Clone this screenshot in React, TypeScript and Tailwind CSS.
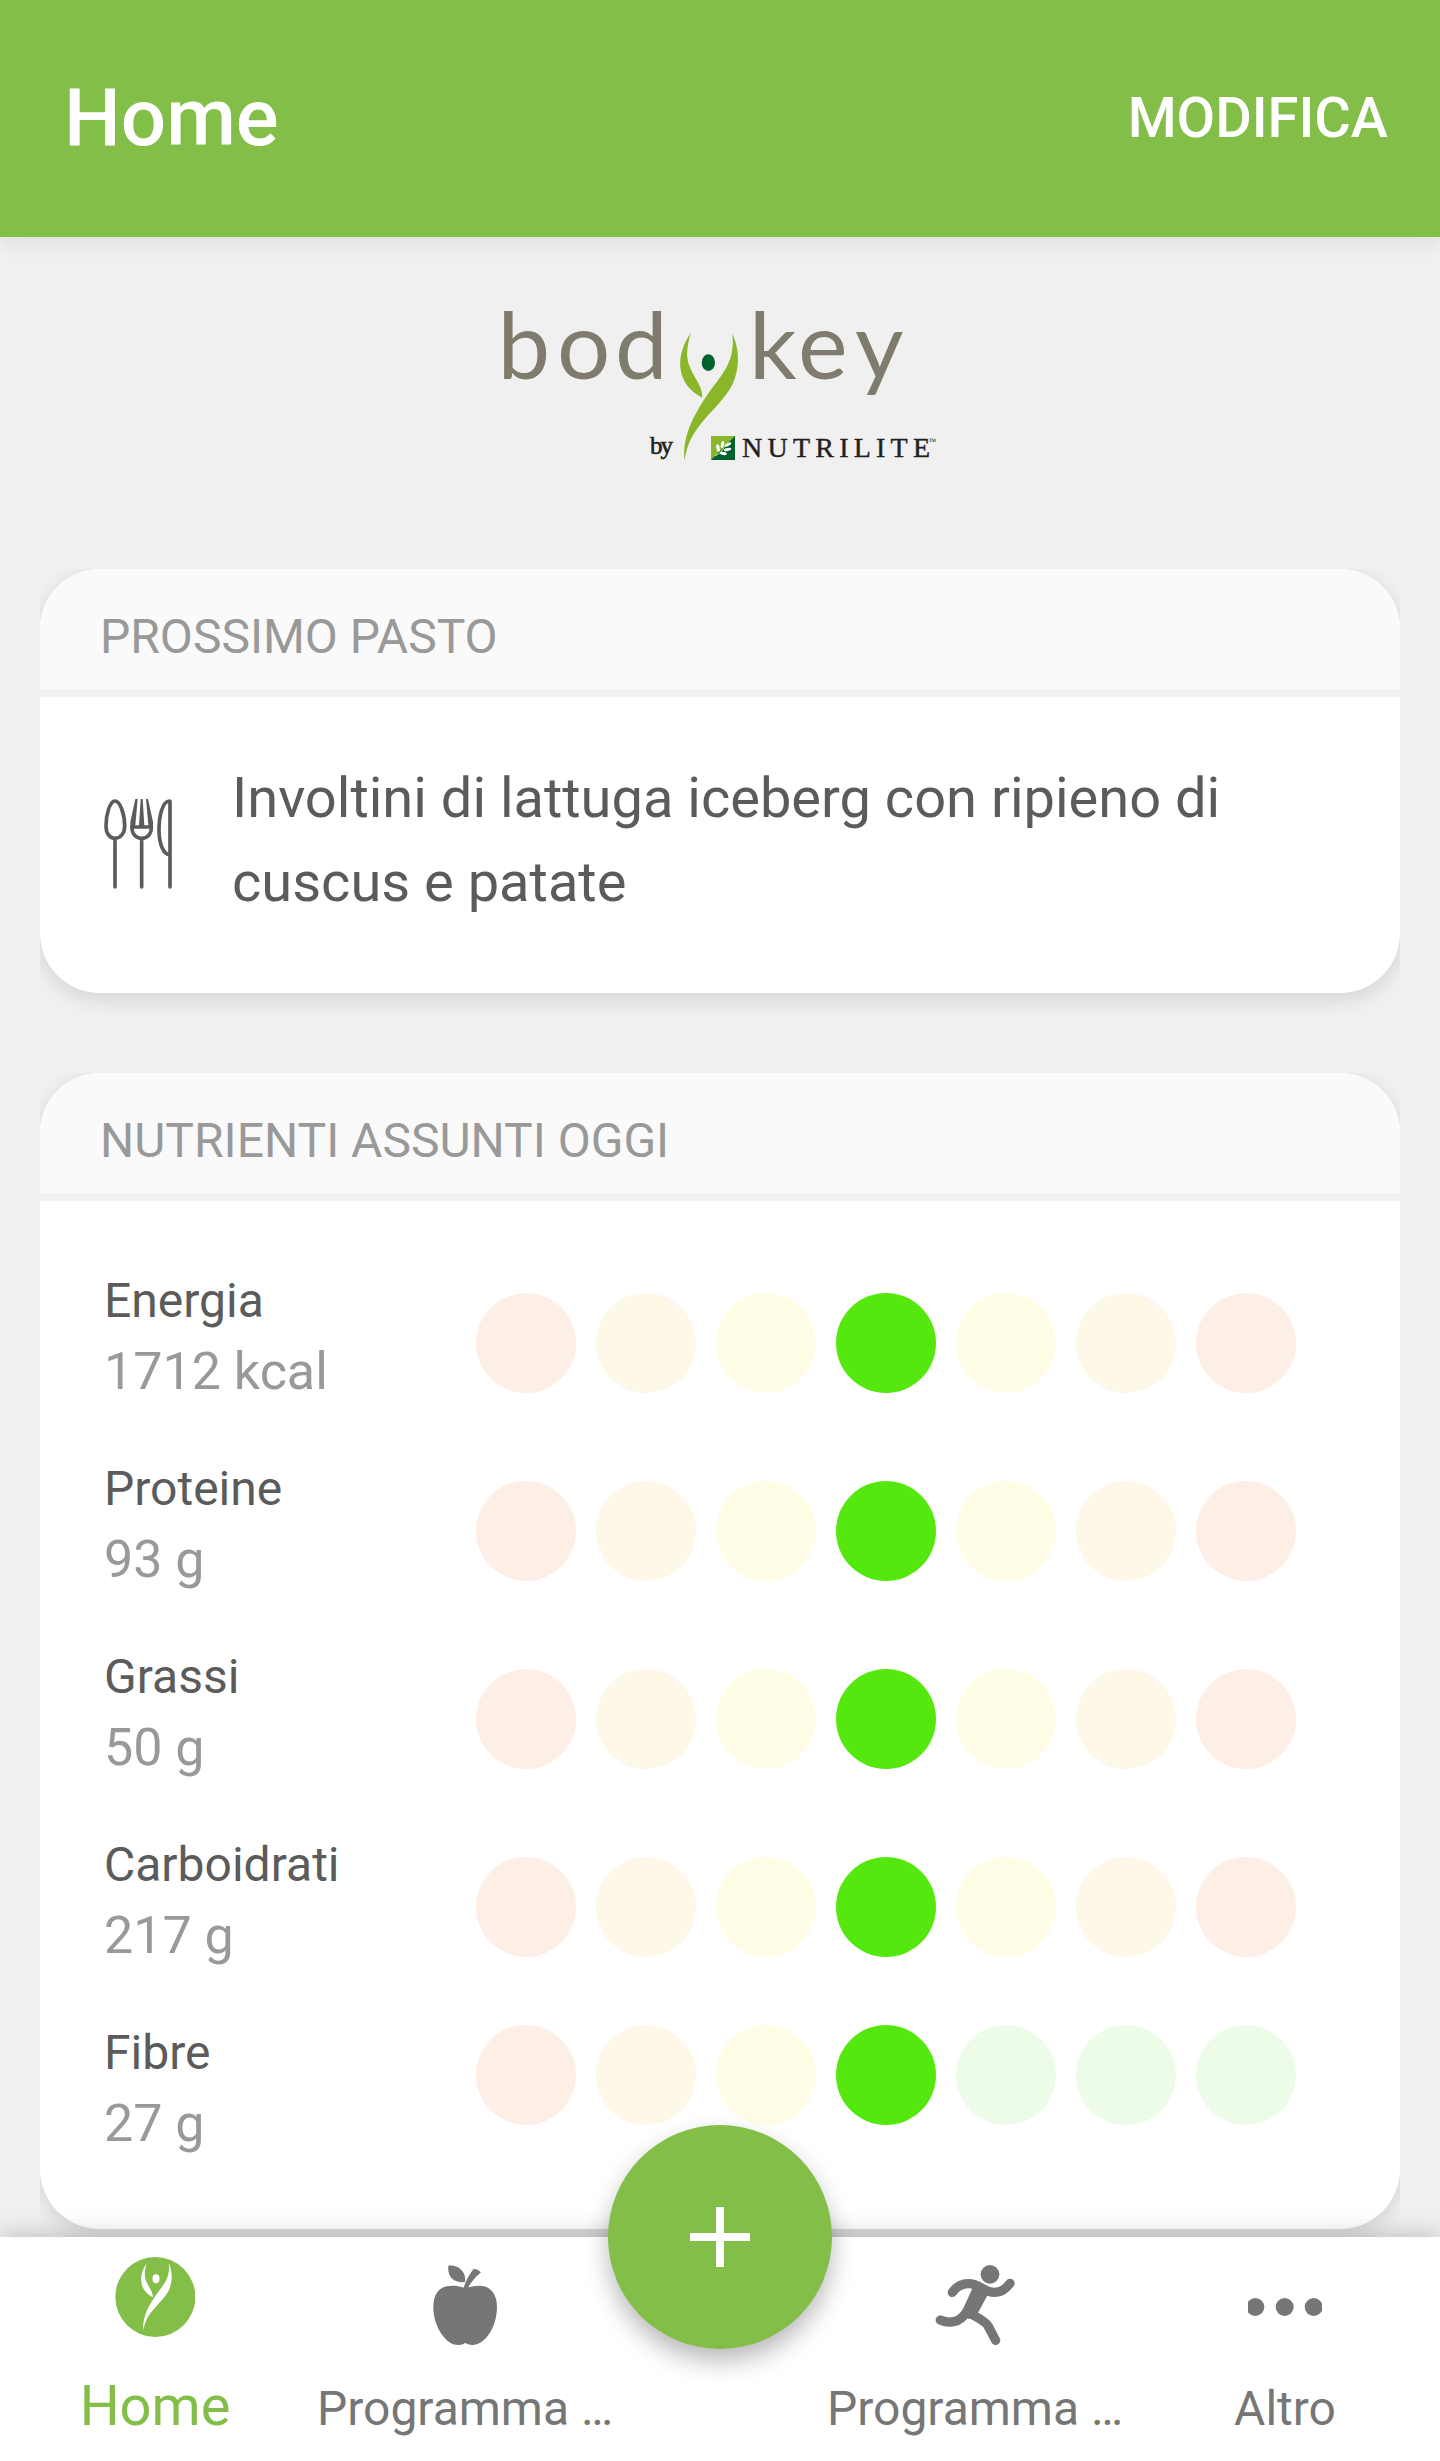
import type { ReactNode } from "react";

const LOW = "bg-[#fdeee6]";
const WARN = "bg-[#fef8e8]";
const NEAR = "bg-[#fffde6]";
const GOOD = "bg-[#55e80e]";
const OVER = "bg-[#ecfce8]";

const balanced = [LOW, WARN, NEAR, GOOD, NEAR, WARN, LOW];
const openEnded = [LOW, WARN, NEAR, GOOD, OVER, OVER, OVER];

const nutrients = [
  { name: "Energia", value: "1712 kcal", levels: balanced, offset: "pt-7" },
  { name: "Proteine", value: "93 g", levels: balanced, offset: "pt-7" },
  { name: "Grassi", value: "50 g", levels: balanced, offset: "pt-7" },
  { name: "Carboidrati", value: "217 g", levels: balanced, offset: "pt-7" },
  { name: "Fibre", value: "27 g", levels: openEnded, offset: "pt-2" },
];

// Stylised "y" shaped person, shared by the logo and the home tab
function Figure({ body, head }: { body: string; head: string }) {
  return (
    <>
      <path
        fill={body}
        d="M634 157C586 222 584 312 667 353C668 298 606 272 625 190C627 176 630 166 634 157Z"
      />
      <path
        fill={body}
        d="M757 161C776 200 783 258 757 314C716 392 626 434 614 542C606 474 636 410 690 333C732 276 766 240 757 161Z"
      />
      <ellipse cx="685" cy="248" rx="20" ry="25" fill={head} />
    </>
  );
}

function BodykeyLogo() {
  return (
    <svg width="480" height="200" viewBox="0 0 480 200">
      <g fill="#7f7c6e" fontFamily="Lato, sans-serif" fontSize="94">
        <text x="17.500 77 135" y="99">bod</text>
        <text x="269 318 375" y="99">key</text>
      </g>
      <g transform="scale(0.33333)">
        <Figure body="#8ab62a" head="#00622d" />
      </g>
      <g fill="#231f20" fontFamily="'Liberation Serif', serif">
        <text x="170" y="174" fontSize="25" textLength="23" stroke="#231f20" strokeWidth="0.6">
          by
        </text>
        <text x="262" y="177" fontSize="28" textLength="188" stroke="#231f20" strokeWidth="0.4">
          NUTRILITE
        </text>
        <text x="448.500" y="164" fontSize="8">™</text>
      </g>
      <path d="M231 156h24v24h-24z" fill="#00622d" />
      <path d="M231 156h24l-24 24z" fill="#8ab62a" />
      <g fill="#fff">
        <ellipse cx="238" cy="168" rx="1.700" ry="3.800" transform="rotate(-12 238 168)" />
        <ellipse cx="242.500" cy="164.500" rx="1.600" ry="3.600" transform="rotate(12 242.500 164.500)" />
        <ellipse cx="248" cy="164.500" rx="1.500" ry="3.600" transform="rotate(60 248 164.500)" />
        <ellipse cx="247.500" cy="169.500" rx="1.500" ry="3.800" transform="rotate(80 247.500 169.500)" />
        <ellipse cx="243.500" cy="173.500" rx="1.500" ry="3.500" transform="rotate(100 243.500 173.500)" />
      </g>
      <path d="M235 176q6-2 10-10" stroke="#fff" strokeWidth="0.8" fill="none" />
    </svg>
  );
}

function UtensilsIcon() {
  return (
    <svg
      width="68"
      height="90"
      viewBox="42 57 204 270"
      fill="none"
      stroke="#5b5b5b"
      strokeWidth="11"
      strokeLinecap="round"
    >
      <path d="M75 63C60 63 48 102 48 138C48 162 60 175 75 175S104 162 104 138C104 102 90 63 75 63ZM75 177V321" />
      <path d="M126 140C125 164 140 175 155 175S185 164 184 140M155 177V321" />
      <path d="M239 63C216 63 207 112 207 150C207 195 222 223 237 224M240 64V321" />
      <path
        stroke="none"
        fill="#5b5b5b"
        d="M136 57h7L136 136h11L152 57h6L163 136h12L168 57h6L189 125V146H121V125Z"
      />
    </svg>
  );
}

function HomeIcon() {
  return (
    <svg width="80" height="80" viewBox="0 0 240 240">
      <circle cx="121" cy="120" r="120" fill="#83be48" />
      <g transform="translate(78 17) scale(0.53) translate(-600 -157)">
        <Figure body="#fff" head="#fff" />
      </g>
    </svg>
  );
}

function AppleIcon() {
  return (
    <svg width="80" height="80" viewBox="0 0 240 240" fill="#767676">
      <path d="M70 2C94-3 125 15 120 51C91 55 66 40 70 2Z" />
      <path d="M115 70Q125 38 146 11Q158 12 168 22Q143 43 128 70Z" />
      <path d="M118 69C96 60 78 62 65 64C38 70 25 92 25 128C25 180 60 240 100 240Q113 240 121 234Q130 240 142 240C184 238 216 182 216 125C216 85 194 62 163 62C147 62 135 66 118 69Z" />
    </svg>
  );
}

function RunnerIcon() {
  return (
    <svg
      width="80"
      height="80"
      viewBox="0 0 240 240"
      fill="none"
      stroke="#767676"
      strokeWidth="28"
      strokeLinecap="round"
      strokeLinejoin="round"
    >
      <circle cx="165" cy="28" r="28" fill="#767676" stroke="none" />
      <path d="M52 82C64 65 80 56 100 56C137 56 145 82 177 82C200 82 212 71 225 55" />
      <path d="M16 165C45 178 74 172 94 142" />
      <path d="M98 142Q152 168 160 184L182 226" />
      <path d="M114 66L158 90L129 143L100 162L80 140L85 130Z" fill="#767676" stroke="none" />
    </svg>
  );
}

function MoreIcon() {
  return (
    <svg width="74" height="80" viewBox="9 0 222 240" fill="#767676">
      <circle cx="31" cy="126" r="27" />
      <circle cx="119" cy="126" r="27" />
      <circle cx="206" cy="126" r="27" />
    </svg>
  );
}

function Card({ title, className, children }: { title: string; className: string; children: ReactNode }) {
  return (
    <section
      className={`mx-10 overflow-hidden rounded-[60px] bg-white shadow-[0_6px_20px_rgba(0,0,0,0.12)] [clip-path:inset(0_0_-40px_0)] ${className}`}
    >
      <h2 className="flex h-32 items-center border-b-8 border-[#f3f1f4] bg-[#fafafa] px-15 pt-4 text-5xl font-normal text-[#999]">
        {title}
      </h2>
      {children}
    </section>
  );
}

function Tab({ icon, label, active = false }: { icon: ReactNode; label: string; active?: boolean }) {
  return (
    <button
      className={
        active
          ? "flex w-[310px] flex-col items-center justify-between pt-5 pb-[23px] text-[56px] leading-[64px] text-[#83be48]"
          : "flex w-[310px] flex-col items-center justify-between pt-7 pb-5 text-5xl leading-[64px] text-[#767676]"
      }
    >
      {icon}
      <span className="whitespace-nowrap">{label}</span>
    </button>
  );
}

export default function App() {
  return (
    <div className="flex h-[2461px] w-[1440px] flex-col overflow-hidden bg-[#f0f0f0] font-[Roboto,sans-serif]">
      <header className="z-10 flex h-[237px] shrink-0 items-center justify-between bg-[#83be48] pr-[52px] pb-0.5 pl-16 text-white shadow-[0_6px_20px_rgba(0,0,0,0.08)]">
        <h1 className="text-[80px] leading-none font-medium">Home</h1>
        <button className="text-[56px] leading-none font-medium">MODIFICA</button>
      </header>

      <main className="h-[2000px] shrink-0">
        <div className="flex h-[332px] justify-center pt-[43px]">
          <BodykeyLogo />
        </div>

        <Card title="PROSSIMO PASTO" className="h-[424px]">
          <div className="flex items-start pt-[59px] pl-16">
            <div className="mt-[43px]">
              <UtensilsIcon />
            </div>
            <p className="ml-15 w-[1060px] text-[56px] leading-[84px] text-[#5b5b5b]">
              Involtini di lattuga iceberg con ripieno di cuscus e patate
            </p>
          </div>
        </Card>

        <Card title="NUTRIENTI ASSUNTI OGGI" className="mt-20 h-[1156px]">
          <ul className="pt-16">
            {nutrients.map((n) => (
              <li key={n.name} className="flex h-[188px] pl-16">
                <div className="w-[372px]">
                  <p className="text-5xl leading-[71px] text-[#5b5b5b]">{n.name}</p>
                  <p className="text-[52px] leading-[72px] text-[#999]">{n.value}</p>
                </div>
                <div className={`flex gap-5 ${n.offset}`}>
                  {n.levels.map((color, i) => (
                    <span key={i} className={`size-25 rounded-full ${color}`} />
                  ))}
                </div>
              </li>
            ))}
          </ul>
        </Card>
      </main>

      <nav className="relative flex h-56 shrink-0 justify-between bg-white shadow-[0_0_24px_rgba(0,0,0,0.25)]">
        <div className="flex">
          <Tab icon={<HomeIcon />} label="Home" active />
          <Tab icon={<AppleIcon />} label="Programma …" />
        </div>
        <div className="flex">
          <Tab icon={<RunnerIcon />} label="Programma …" />
          <Tab icon={<MoreIcon />} label="Altro" />
        </div>
        <button className="absolute -top-28 left-[608px] flex size-56 items-center justify-center rounded-full bg-[#83be48] shadow-[0_12px_24px_rgba(0,0,0,0.28)]">
          <svg width="60" height="60" viewBox="0 0 60 60" stroke="#fff" strokeWidth="8">
            <path d="M30 0v60M0 30h60" />
          </svg>
        </button>
      </nav>
    </div>
  );
}
